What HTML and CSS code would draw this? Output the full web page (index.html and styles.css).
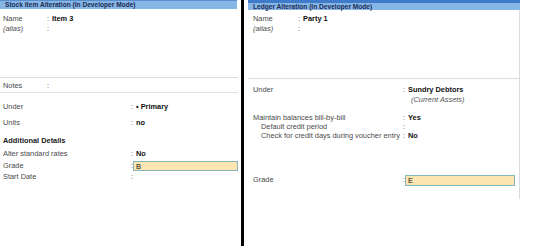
FILE: index.html
```html
<!DOCTYPE html>
<html>
<head>
<meta charset="utf-8">
<link rel="stylesheet" href="styles.css">
</head>
<body>
<div class="screen">
  <section class="left">
    <div class="title-l">Stock Item Alteration (In Developer Mode)</div>
    <div class="l-top">
      <div class="row"><span class="lab w44">Name</span><span class="col">:</span><span class="val">Item 3</span></div>
      <div class="row"><span class="lab w44 it">(alias)</span><span class="col">:</span></div>
    </div>
    <div class="l-notes">
      <div class="row"><span class="lab w44">Notes</span><span class="col">:</span></div>
    </div>
    <div class="row m9"><span class="lab w128">Under</span><span class="col">:</span><span class="val">&#8226; Primary</span></div>
    <div class="row m6"><span class="lab w128">Units</span><span class="col">:</span><span class="val">no</span></div>
    <div class="row m8"><span class="head">Additional Details</span></div>
    <div class="row m3"><span class="lab w128">Alter standard rates</span><span class="col">:</span><span class="val">No</span></div>
    <div class="row m2"><span class="lab w128">Grade</span><span class="col">:</span><span class="input in-l">B</span></div>
    <div class="row m1"><span class="lab w128">Start Date</span><span class="col">:</span></div>
  </section>
  <div class="divider"></div>
  <section class="right">
    <div class="title-r">Ledger Alteration (In Developer Mode)</div>
    <div class="r-body">
      <div class="r-top">
        <div class="row"><span class="lab w45">Name</span><span class="col">:</span><span class="val">Party 1</span></div>
        <div class="row"><span class="lab w45 it">(alias)</span><span class="col">:</span></div>
      </div>
      <div class="r-box">
        <div class="row"><span class="lab w150">Under</span><span class="col">:</span><span class="val">Sundry Debtors</span></div>
        <div class="row h9"><span class="lab w150"></span><span class="sub it">(Current Assets)</span></div>
        <div class="row h9 m9"><span class="lab w150">Maintain balances bill-by-bill</span><span class="col">:</span><span class="val">Yes</span></div>
        <div class="row h9"><span class="lab w150 ind">Default credit period</span><span class="col">:</span></div>
        <div class="row h9"><span class="lab w150 ind">Check for credit days during voucher entry</span><span class="col">:</span><span class="val">No</span></div>
        <div class="row m35"><span class="lab w150">Grade</span><span class="col">:</span><span class="input in-r">E</span></div>
      </div>
    </div>
  </section>
</div>
</body>
</html>
```
FILE: styles.css
```css
html, body {
  margin: 0;
  padding: 0;
  background: #fff;
}
body {
  font-family: "Liberation Sans", Arial, sans-serif;
  font-size: 7.4px;
  color: #4a4a4a;
}
.screen {
  display: flex;
  width: 533px;
  height: 246px;
  overflow: hidden;
}
.left {
  width: 238px;
  margin-right: 3px;
}
.divider {
  width: 3px;
  background: #000;
  height: 246px;
}
.right {
  margin-left: 4px;
  width: 272px;
}
.title-l, .title-r {
  font-weight: bold;
  font-size: 6.6px;
  color: #1d2d55;
  background: #86b6e6;
  white-space: nowrap;
  box-sizing: border-box;
}
.title-l {
  height: 9px;
  line-height: 8px;
  padding-left: 5px;
  border-top: 1px solid #5b8fd0;
  width: 237px;
}
.title-r {
  height: 10px;
  line-height: 7px;
  padding-left: 5px;
  border-top: 3px solid #3f7bc8;
}
.row {
  display: flex;
  align-items: center;
  height: 10px;
  line-height: 10px;
  white-space: nowrap;
}
.h9 { height: 9px; line-height: 9px; }
.lab { padding-left: 3px; box-sizing: border-box; flex: none; }
.w44 { width: 47px; }
.w128 { width: 131px; }
.w45 { width: 50px; padding-left: 5px; }
.w150 { width: 155px; padding-left: 5px; }
.ind { padding-left: 13px; }
.it { font-style: italic; }
.col { width: 5px; flex: none; }
.val { font-weight: bold; color: #111; }
.head { font-weight: bold; color: #222; padding-left: 3px; }
.sub { padding-left: 8px; color: #555; }
.l-top {
  padding-top: 5px;
  height: 63px;
  border-bottom: 1px solid #dcdcdc;
}
.l-notes {
  padding-top: 3px;
  height: 11px;
  border-bottom: 1px solid #e2e2e2;
}
.m1 { margin-top: 1px; }
.m2 { margin-top: 2px; }
.m3 { margin-top: 3px; }
.m6 { margin-top: 6px; }
.m8 { margin-top: 8px; }
.m9 { margin-top: 9px; }
.m35 { margin-top: 35px; }
.input {
  display: block;
  height: 10px;
  line-height: 9px;
  box-sizing: border-box;
  background: #fde6b2;
  border: 1px solid #86b5bd;
  color: #111;
  padding-left: 2px;
  font-size: 7.6px;
}
.in-l { width: 106px; margin-left: -3px; }
.in-r { width: 110px; height: 11px; margin-left: -3px; line-height: 10px; }
.r-body {
  border-right: 1px solid #dcdcdc;
  height: 189px;
}
.r-top {
  padding-top: 4px;
  height: 64px;
  border-bottom: 1px solid #dcdcdc;
}
.r-box {
  padding-top: 6px;
}
```
